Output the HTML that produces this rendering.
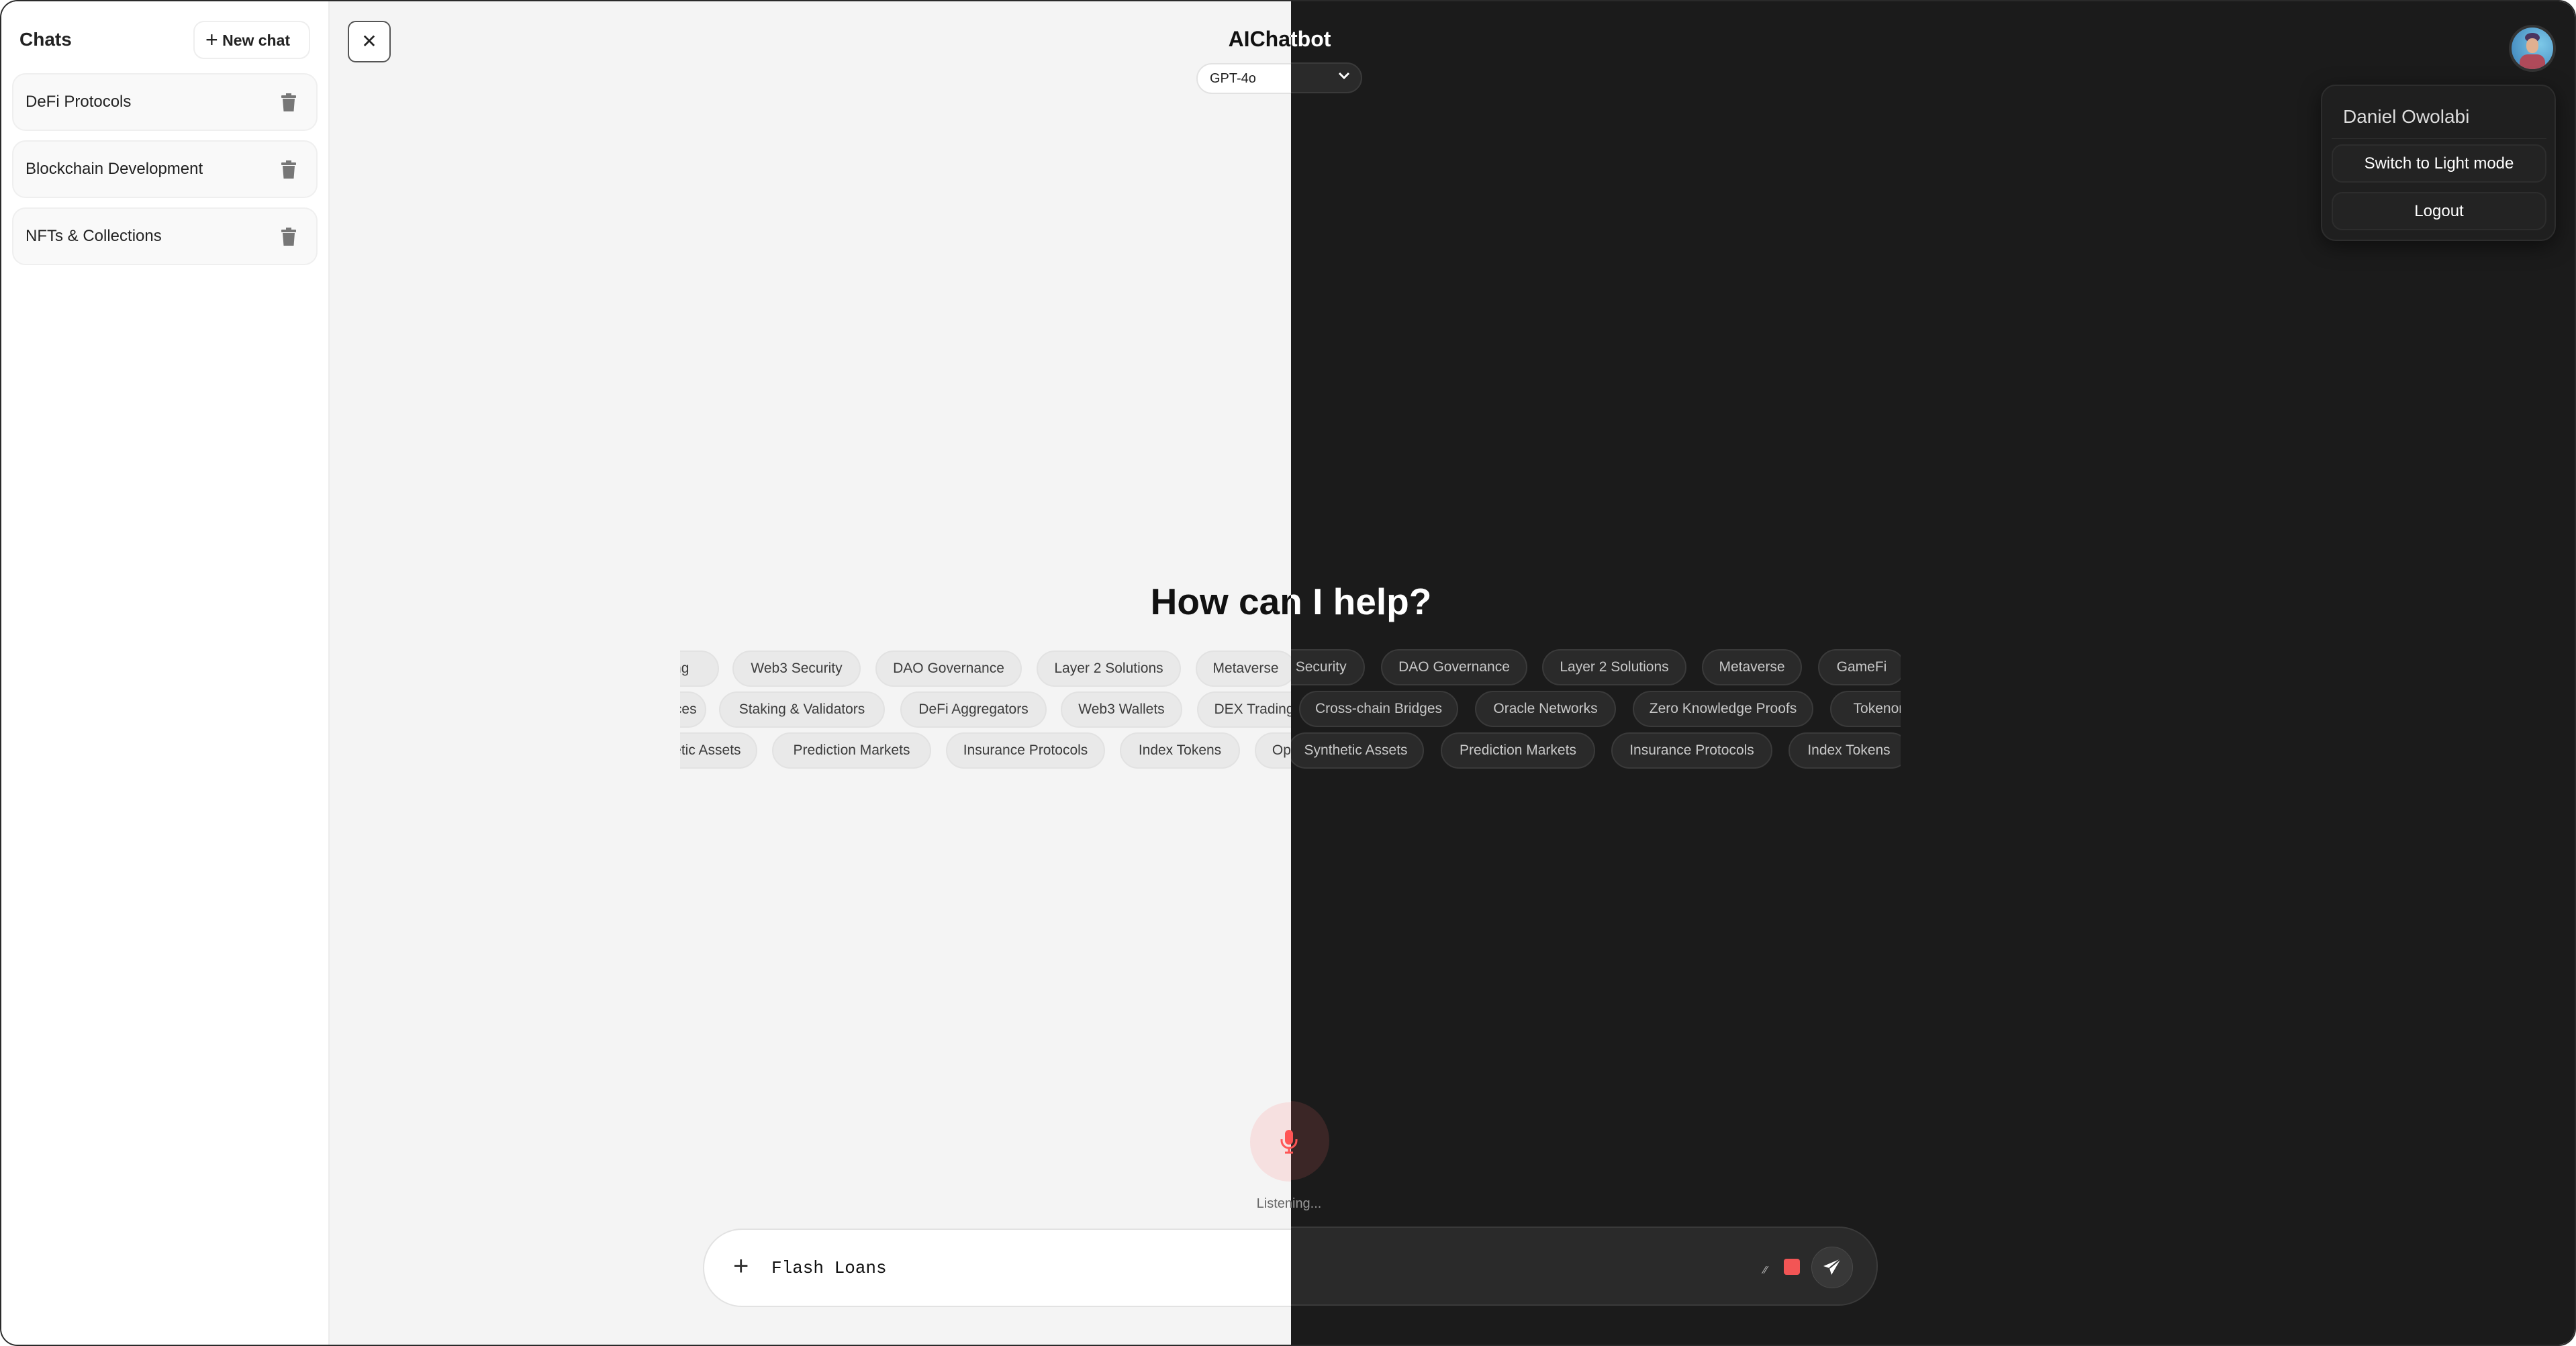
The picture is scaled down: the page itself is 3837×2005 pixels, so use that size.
<!DOCTYPE html>
<html><head><meta charset="utf-8"><style>
*{box-sizing:border-box;margin:0;padding:0}
html,body{width:3837px;height:2005px;overflow:hidden;background:#fff;font-family:"Liberation Sans",sans-serif}
#frame{position:absolute;left:0;top:0;width:3837px;height:2005px;border:2px solid #2a2a2a;border-radius:26px;overflow:hidden;background:#f4f4f4}
.abs{position:absolute}
#side{left:0;top:0;width:489px;height:2005px;background:#fff;border-right:2px solid #ececec}
.item{position:absolute;left:16px;width:455px;height:86px;background:#f9f9f9;border:2px solid #efefef;border-radius:20px;font-size:24px;color:#222;padding-left:18px;line-height:82px}
.trash{position:absolute;right:30px;top:28px}
#dark{position:absolute;left:0;top:0;width:3837px;height:2005px;background:#1b1b1b;clip-path:inset(0 0 0 1921px)}
.chip{position:absolute;height:54px;border-radius:27px;font-size:21px;line-height:50px;text-align:center;white-space:nowrap;overflow:hidden}
.L .chip{background:#e9e9e9;border:2px solid #e2e2e2;color:#3c3c3c}
.D .chip{background:#2a2a2a;border:2px solid #3a3a3a;color:#c8c8c8}
.clipL{position:absolute;left:1011px;top:950px;width:910px;height:200px;overflow:hidden}
.clipD{position:absolute;left:1921px;top:950px;width:908px;height:200px;overflow:hidden}
</style></head><body>
<div id="frame">
  <div class="abs" id="side">
    <div class="abs" style="left:27px;top:41px;font-size:28px;font-weight:bold;color:#222">Chats</div>
    <div class="abs" style="left:286px;top:29px;width:174px;height:57px;border:2px solid #eee;border-radius:16px;background:#fff;font-size:23px;font-weight:bold;color:#222;line-height:53px;padding-left:16px">
      <span style="font-size:32px;font-weight:normal;vertical-align:-2px">+</span>&nbsp;New chat</div>
    <div class="item" style="top:107px">DeFi Protocols<svg class="trash" width="22" height="28" viewBox="0 0 22 28"><rect x="0" y="3" width="22" height="4" rx="1" fill="#777"/><rect x="7" y="0" width="8" height="4" fill="#777"/><path d="M2 8h18l-1.5 19h-15z" fill="#777"/></svg></div>
    <div class="item" style="top:207px">Blockchain Development<svg class="trash" width="22" height="28" viewBox="0 0 22 28"><rect x="0" y="3" width="22" height="4" rx="1" fill="#777"/><rect x="7" y="0" width="8" height="4" fill="#777"/><path d="M2 8h18l-1.5 19h-15z" fill="#777"/></svg></div>
    <div class="item" style="top:307px">NFTs &amp; Collections<svg class="trash" width="22" height="28" viewBox="0 0 22 28"><rect x="0" y="3" width="22" height="4" rx="1" fill="#777"/><rect x="7" y="0" width="8" height="4" fill="#777"/><path d="M2 8h18l-1.5 19h-15z" fill="#777"/></svg></div>
  </div>
  <div class="abs" style="left:516px;top:29px;width:64px;height:62px;border:2px solid #555;border-radius:12px;background:#fff;text-align:center;line-height:58px;font-size:28px;color:#222">✕</div>
  <div class="abs" style="left:1780px;top:92px;width:247px;height:46px;border:2px solid #e2e2e2;border-radius:23px;background:#fff;font-size:20px;color:#222;line-height:42px;padding-left:18px">GPT-4o</div>
  <div class="abs" style="left:1684px;top:38px;width:440px;text-align:center;font-size:32px;font-weight:bold;color:#111">AIChatbot</div>
  <div class="abs" style="left:1500px;top:862px;width:842px;text-align:center;font-size:55px;font-weight:bold;color:#111">How can I help?</div>
  <div class="clipL L">
    <div class="chip" style="left:-160px;top:17px;width:218px">Yield Farming</div>
    <div class="chip" style="left:78px;top:17px;width:191px">Web3 Security</div>
    <div class="chip" style="left:291px;top:17px;width:218px">DAO Governance</div>
    <div class="chip" style="left:531px;top:17px;width:215px">Layer 2 Solutions</div>
    <div class="chip" style="left:768px;top:17px;width:149px">Metaverse</div>
    <div class="chip" style="left:-161px;top:78px;width:200px">NFT Marketplaces</div>
    <div class="chip" style="left:58px;top:78px;width:247px">Staking &amp; Validators</div>
    <div class="chip" style="left:328px;top:78px;width:218px">DeFi Aggregators</div>
    <div class="chip" style="left:567px;top:78px;width:181px">Web3 Wallets</div>
    <div class="chip" style="left:770px;top:78px;width:170px">DEX Trading</div>
    <div class="chip" style="left:-88px;top:139px;width:203px">Synthetic Assets</div>
    <div class="chip" style="left:137px;top:139px;width:237px">Prediction Markets</div>
    <div class="chip" style="left:396px;top:139px;width:237px">Insurance Protocols</div>
    <div class="chip" style="left:655px;top:139px;width:179px">Index Tokens</div>
    <div class="chip" style="left:856px;top:139px;width:200px">Options Trading</div>
  </div>
  <div class="abs" style="left:1860px;top:1640px;width:118px;height:118px;border-radius:50%;background:#f6e0e0"></div>
  <div class="abs" style="left:1838px;top:1780px;width:160px;text-align:center;font-size:20px;color:#666">Listening...</div>
  <div class="abs" style="left:1045px;top:1828px;width:1750px;height:117px;border:2px solid #e2e2e2;border-radius:58px;background:#fff"></div>
  <div class="abs" style="left:1090px;top:1862px;font-size:40px;color:#333;font-weight:300">+</div>
  <div class="abs" style="left:1147px;top:1872px;font-size:26px;font-family:'Liberation Mono',monospace;color:#111">Flash Loans</div>

  <div id="dark">
    <div class="abs" style="left:1780px;top:91px;width:247px;height:46px;border:2px solid #3a3a3a;border-radius:23px;background:#2a2a2a"></div>
    <svg class="abs" style="left:1990px;top:104px" width="20" height="14" viewBox="0 0 20 14"><path d="M3 3l7 7 7-7" stroke="#fff" stroke-width="3" fill="none"/></svg>
    <div class="abs" style="left:1684px;top:38px;width:440px;text-align:center;font-size:32px;font-weight:bold;color:#fff">AIChatbot</div>
    <div class="abs" style="left:1500px;top:862px;width:842px;text-align:center;font-size:55px;font-weight:bold;color:#fff">How can I help?</div>
    <div class="abs" style="left:1860px;top:1638px;width:118px;height:118px;border-radius:50%;background:#3b2626"></div>
    <div class="abs" style="left:1838px;top:1780px;width:160px;text-align:center;font-size:20px;color:#999">Listening...</div>
    <div class="abs" style="left:1045px;top:1825px;width:1750px;height:118px;border:2px solid #3a3a3a;border-radius:58px;background:#2a2a2a"></div>
  </div>
  <svg class="abs" style="left:1905px;top:1681px" width="26" height="36" viewBox="0 0 26 36"><rect x="7" y="0" width="12" height="22" rx="6" fill="#f55"/><path d="M2 14v2a11 11 0 0 0 22 0v-2" stroke="#f55" stroke-width="3" fill="none"/><path d="M13 27v6M7 34h12" stroke="#f55" stroke-width="3"/></svg>
  <div class="clipD D">
    <div class="chip" style="left:-81px;top:15px;width:191px">Web3 Security</div>
    <div class="chip" style="left:134px;top:15px;width:218px">DAO Governance</div>
    <div class="chip" style="left:374px;top:15px;width:215px">Layer 2 Solutions</div>
    <div class="chip" style="left:612px;top:15px;width:149px">Metaverse</div>
    <div class="chip" style="left:785px;top:15px;width:130px">GameFi</div>
    <div class="chip" style="left:12px;top:77px;width:237px">Cross-chain Bridges</div>
    <div class="chip" style="left:274px;top:77px;width:210px">Oracle Networks</div>
    <div class="chip" style="left:509px;top:77px;width:269px">Zero Knowledge Proofs</div>
    <div class="chip" style="left:803px;top:77px;width:180px">Tokenomics</div>
    <div class="chip" style="left:-5px;top:139px;width:203px">Synthetic Assets</div>
    <div class="chip" style="left:223px;top:139px;width:230px">Prediction Markets</div>
    <div class="chip" style="left:477px;top:139px;width:240px">Insurance Protocols</div>
    <div class="chip" style="left:741px;top:139px;width:180px">Index Tokens</div>
  </div>
  <div class="abs" style="left:2625px;top:1882px;color:#bbb;font-size:16px">⁄⁄</div>
  <div class="abs" style="left:2655px;top:1873px;width:24px;height:24px;border-radius:4px;background:#f25555"></div>
  <div class="abs" style="left:2696px;top:1855px;width:62px;height:62px;border-radius:50%;background:#383838;border:1px solid #4a4a4a"></div>
  <svg class="abs" style="left:2711px;top:1870px" width="32" height="32" viewBox="0 0 32 32"><path d="M29 3L3 14l9 3 3 10z" fill="#fff"/><path d="M12 17L29 3" stroke="#383838" stroke-width="2"/></svg>
  <div class="abs" style="left:3735px;top:35px;width:70px;height:70px;border-radius:50%;background:#333;padding:4px">
    <div style="width:62px;height:62px;border-radius:50%;background:radial-gradient(circle at 70% 40%,#7cc8e8,#3a7fb8);position:relative;overflow:hidden">
      <div style="position:absolute;left:20px;top:8px;width:22px;height:14px;border-radius:50%;background:#4a3560"></div>
      <div style="position:absolute;left:22px;top:16px;width:18px;height:22px;border-radius:45%;background:#e0b090"></div>
      <div style="position:absolute;left:12px;top:40px;width:38px;height:26px;border-radius:12px 12px 0 0;background:#b04a5a"></div>
    </div>
  </div>
  <div class="abs" style="left:3455px;top:124px;width:350px;height:233px;background:#1f1f1f;border:2px solid #2d2d2d;border-radius:22px;box-shadow:0 8px 30px rgba(0,0,0,.5)">
    <div class="abs" style="left:31px;top:30px;font-size:28px;color:#ddd">Daniel Owolabi</div>
    <div class="abs" style="left:14px;top:78px;width:320px;height:1px;background:#2e2e2e"></div>
    <div class="abs" style="left:14px;top:87px;width:320px;height:57px;border:2px solid #2d2d2d;border-radius:16px;background:#232323;color:#fff;font-size:24px;text-align:center;line-height:53px">Switch to Light mode</div>
    <div class="abs" style="left:14px;top:158px;width:320px;height:57px;border:2px solid #2d2d2d;border-radius:16px;background:#232323;color:#fff;font-size:24px;text-align:center;line-height:53px">Logout</div>
  </div>
</div>
</body></html>
